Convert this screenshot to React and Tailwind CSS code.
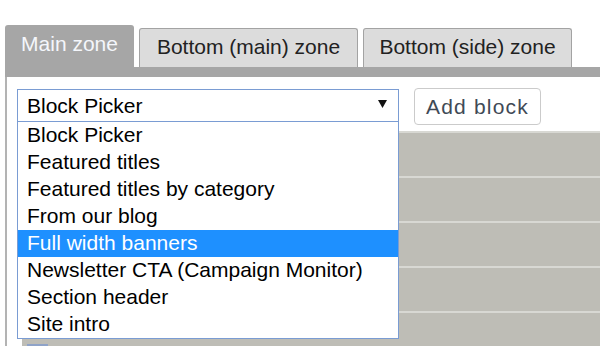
import React from "react";

const items = [
  "Block Picker",
  "Featured titles",
  "Featured titles by category",
  "From our blog",
  "Full width banners",
  "Newsletter CTA (Campaign Monitor)",
  "Section header",
  "Site intro",
];

export default function App() {
  return (
    <div
      className="w-[600px] h-[346px] overflow-hidden bg-white pt-[25px] pl-[5px] text-[21px]"
      style={{ fontFamily: "'Liberation Sans', Arial, sans-serif" }}
    >
      <div className="flex items-end gap-[5px] h-[42px] w-[700px]">
        <div className="w-[129px] h-[42px] shrink-0 bg-[#a6a6a6] rounded-t-[3px] text-[#f4f6fb] flex justify-center pt-[7px] leading-[24px]">
          Main zone
        </div>
        <div className="w-[219px] h-[39px] shrink-0 bg-[#dcdcdc] border border-b-0 border-[#a3a3a3] rounded-t-[3px] text-[#222] flex justify-center pt-[6px] leading-[24px]">
          Bottom (main) zone
        </div>
        <div className="w-[209px] h-[39px] shrink-0 bg-[#dcdcdc] border border-b-0 border-[#a3a3a3] rounded-t-[3px] text-[#222] flex justify-center pt-[6px] leading-[24px]">
          Bottom (side) zone
        </div>
      </div>
      <div className="h-[10px] bg-[#a6a6a6]" />
      <div className="border-l-2 border-[#b3b3b3] h-[269px] w-[700px]">
        <div className="flex items-start gap-[15px] pt-[11px] pl-[10px]">
          <div className="relative mt-[1px]">
            <div className="w-[382px] h-[33px] border border-[#7a9cd3] bg-white flex items-center pl-[9px] leading-[24px] text-black">
              Block Picker
              <svg
                className="absolute right-[12px] top-[11px]"
                width="9"
                height="8"
                viewBox="0 0 9 8"
              >
                <polygon points="0,0 9,0 4.5,8" fill="#111" />
              </svg>
            </div>
            <div className="absolute left-0 top-[32px] z-10 w-[382px] border border-[#7a9cd3] bg-white text-black">
              {items.map((it, i) => (
                <div
                  key={it}
                  className={
                    i === 4
                      ? "h-[27px] leading-[25px] pl-[9px] bg-[#1e90ff] text-white whitespace-nowrap"
                      : "h-[27px] leading-[25px] pl-[9px] whitespace-nowrap"
                  }
                >
                  {it}
                </div>
              ))}
            </div>
          </div>
          <button className="w-[127px] h-[37px] border border-[#cbcbcb] rounded-[4px] bg-white text-[#3f4a56] text-[21px] tracking-[1.2px] leading-[24px] flex items-center justify-center">
            Add block
          </button>
        </div>
        <div className="ml-[15px] mt-[6px] flex flex-col">
          {[0, 1, 2, 3, 4].map((r) => (
            <div
              key={r}
              className="h-[45px] border-t-2 border-[#d8d8d3] bg-[#bebdb6] relative"
            >
              {r === 4 && (
                <div className="absolute left-[5px] top-[31px] w-[21px] h-[3px] bg-[#8fa3c8]" />
              )}
            </div>
          ))}
        </div>
      </div>
    </div>
  );
}
